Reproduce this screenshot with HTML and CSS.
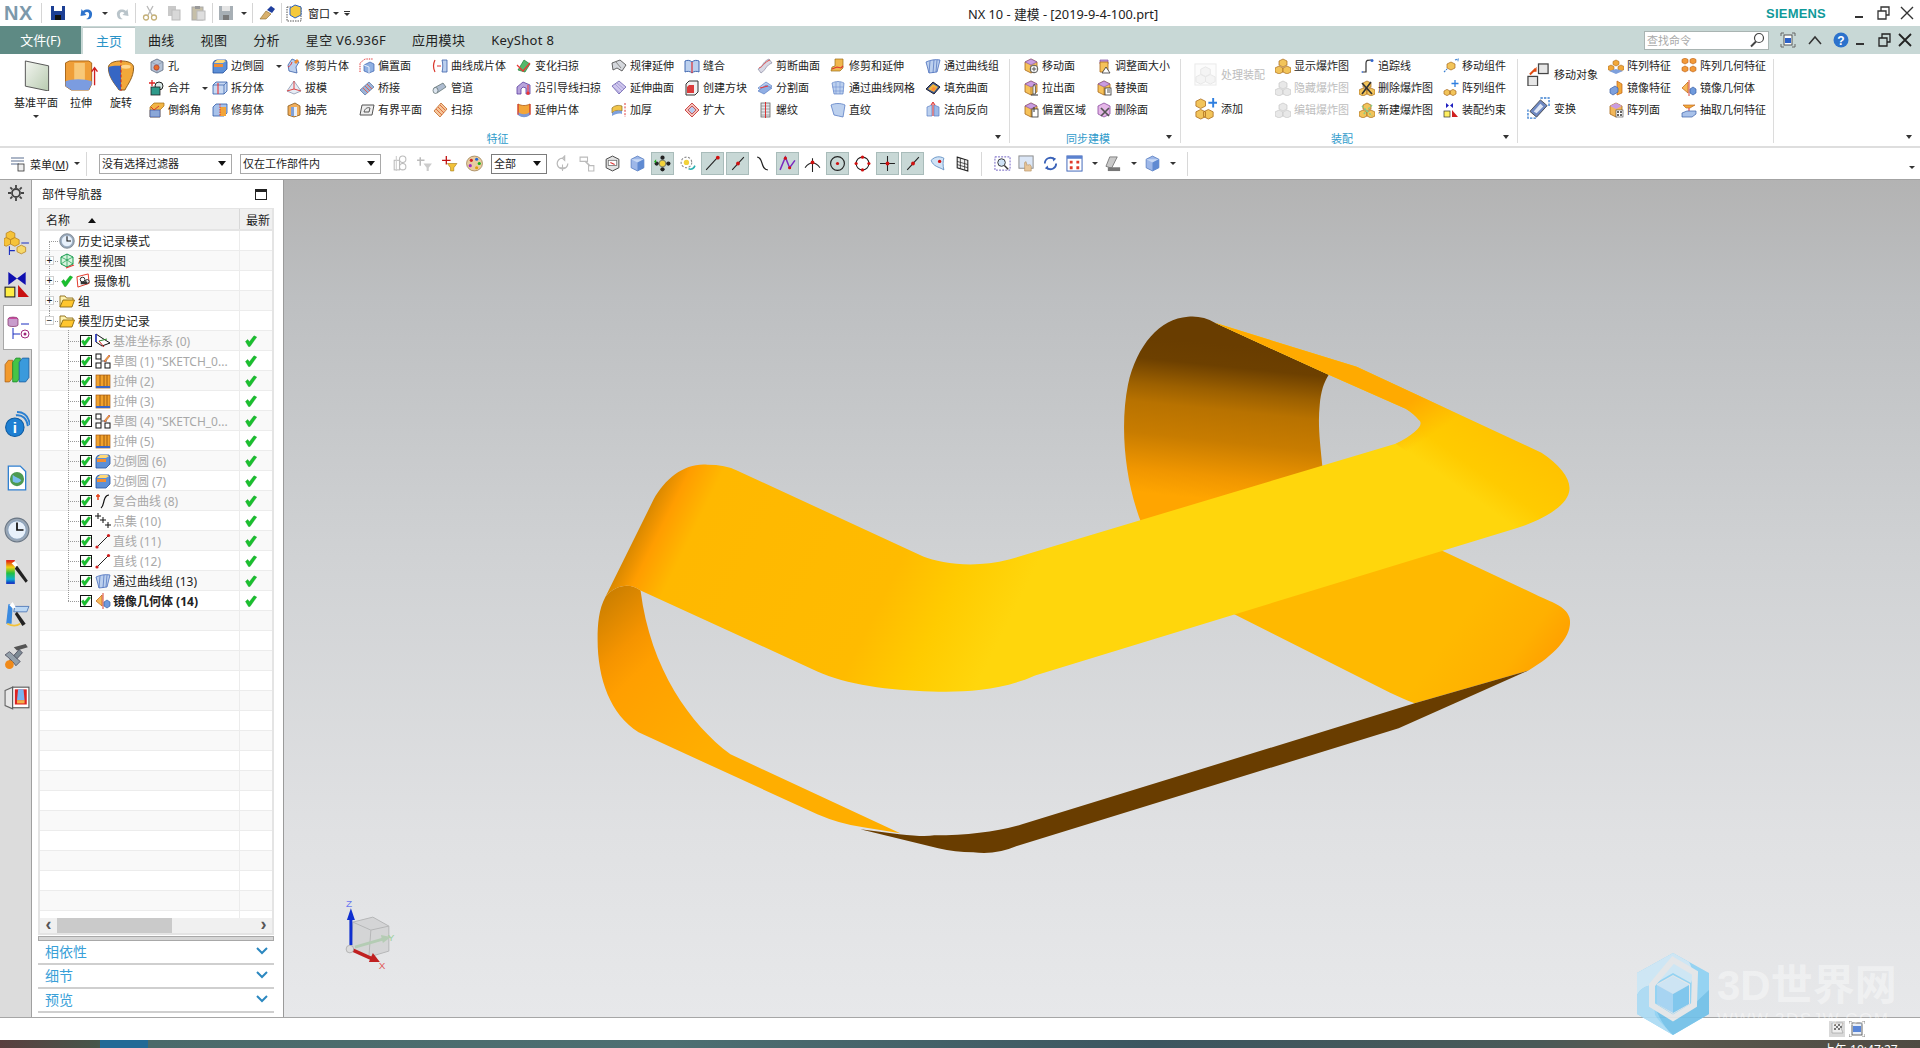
FILE: index.html
```html
<!DOCTYPE html>
<html lang="zh-CN">
<head>
<meta charset="utf-8">
<title>NX 10 - 建模 - [2019-9-4-100.prt]</title>
<link rel="stylesheet" href="styles.css">
</head>
<body>
<svg class="defs" aria-hidden="true">
<defs>
<symbol id="hole" viewBox="0 0 16 16"><path d="M2 4l6-3 6 3v8l-6 3-6-3z" fill="#b4c2d6" stroke="#5d6b80" stroke-width=".8"/><path d="M2 4l6 3 6-3M8 7v8" fill="none" stroke="#7d8ba0" stroke-width=".6"/><circle cx="7.5" cy="9.5" r="2.6" fill="#e8702a" stroke="#a33" stroke-width=".7"/></symbol>
<symbol id="merge" viewBox="0 0 16 16"><path d="M3 0v6M0 3h6" stroke="#d22" stroke-width="1.3"/><circle cx="10" cy="6" r="4" fill="#d9e8e6" stroke="#222"/><rect x="2" y="7" width="9" height="8" fill="#2e9a8a" stroke="#222" stroke-width=".8"/></symbol>
<symbol id="chamfer" viewBox="0 0 16 16"><path d="M1 5l4-4h10v3l-4 4v7H1z" fill="#f2b544" stroke="#a46a10" stroke-width=".7"/><path d="M1 8h10v7H1z" fill="#8aa7d8" stroke="#3a55a0" stroke-width=".7"/><path d="M2 5l3 3 5-4" fill="none" stroke="#d9352a"/></symbol>
<symbol id="fillet" viewBox="0 0 16 16"><path d="M1 5q1-3 4-3h9l1 2v7l-4 4H1z" fill="#5d8fd6" stroke="#24509e" stroke-width=".8"/><path d="M2 5h9l3-2-2-1H5z" fill="#ffd877"/><path d="M2 6h9v3H2z" fill="#f28d32"/></symbol>
<symbol id="split" viewBox="0 0 16 16"><path d="M1 5l3-3h11v9l-3 3H1z" fill="#c7d8f2" stroke="#2f5aa8" stroke-width=".8"/><path d="M1 5h11v9M12 5l3-3" fill="none" stroke="#2f5aa8" stroke-width=".7"/><path d="M6 3v11" stroke="#e33" stroke-width="1.1"/></symbol>
<symbol id="trimb" viewBox="0 0 16 16"><path d="M1 5l3-3h11v9l-3 3H1z" fill="#a8c2ea" stroke="#2f5aa8" stroke-width=".8"/><rect x="8" y="5" width="6" height="9" fill="#f2a53a"/><path d="M8 2v12" stroke="#d33" stroke-dasharray="1.5 1"/></symbol>
<symbol id="tsheet" viewBox="0 0 16 16"><path d="M6 1l7 3-3 5 1 6-8-2-1-6z" fill="#bcd0ee" stroke="#3a5fa8" stroke-width=".8"/><path d="M11 1l-3 3 2 2 3-3z" fill="#ee8a30"/><path d="M2 9c2-1 3-2 4-5" fill="none" stroke="#e03a3a"/></symbol>
<symbol id="draft" viewBox="0 0 16 16"><path d="M8 1L1 11l7 3 7-3z" fill="#e7ecf4" stroke="#7c8aa5" stroke-width=".7"/><path d="M8 1v8M1 11l7-2 7 2" fill="none" stroke="#d33" stroke-width=".9"/></symbol>
<symbol id="shell" viewBox="0 0 16 16"><path d="M2 4l7-3 5 3v9l-6 2-6-2z" fill="#f0ae5c" stroke="#8a5a1a" stroke-width=".8"/><path d="M5 5h6v9H5z" fill="#7fa0d8"/><path d="M8 5h3v9H8z" fill="#e6edf8"/></symbol>
<symbol id="offs" viewBox="0 0 16 16"><path d="M1 14V5l5-4h8" fill="none" stroke="#d33" stroke-dasharray="1.4 1"/><path d="M5 7l6-3 4 2v7l-5 2-5-2z" fill="#8fb0e2" stroke="#3b62ae" stroke-width=".7"/><path d="M5 7l5 2v6" fill="none" stroke="#e8f0fb"/></symbol>
<symbol id="bridge" viewBox="0 0 16 16"><path d="M1 10l9-8 5 5-9 8z" fill="#9ab3d8" stroke="#54709e" stroke-width=".7"/><path d="M4 8l5 5M6 6l5 5M8 4l5 5" stroke="#e55a4a" stroke-width=".9"/></symbol>
<symbol id="bound" viewBox="0 0 16 16"><path d="M3 3h12l-2 10H1z" fill="#eee" stroke="#555" stroke-width="1"/><path d="M5 10c1-4 4-5 6-4l-1 4z" fill="none" stroke="#555"/></symbol>
<symbol id="curves" viewBox="0 0 16 16"><path d="M3 2C1 6 1 10 3 14" fill="none" stroke="#d9352a" stroke-width="1.2"/><path d="M10 2h5v12h-5c1-4 1-8 0-12z" fill="#bcd0ee" stroke="#3a5fa8" stroke-width=".8"/><path d="M5 8h4" stroke="#d33"/></symbol>
<symbol id="pipe" viewBox="0 0 16 16"><path d="M2 8l9-5 3 4-9 6z" fill="#aebcd0" stroke="#566" stroke-width=".7"/><ellipse cx="3.5" cy="10.5" rx="2.5" ry="3" fill="#dce4ee" stroke="#566" stroke-width=".7"/></symbol>
<symbol id="sweep" viewBox="0 0 16 16"><path d="M2 9l7-8 6 6-7 8z" fill="#f4c79a" stroke="#c46a2a" stroke-width=".8"/><path d="M4 7l6 6M6 5l6 6M8 3l5 5" stroke="#d9552a" stroke-width=".8"/></symbol>
<symbol id="vsweep" viewBox="0 0 16 16"><path d="M2 12L8 2l6 4-5 8z" fill="#56b86a" stroke="#1d7f37" stroke-width=".7"/><path d="M1 7l6 6 7-8" fill="none" stroke="#e33" stroke-width="1.2"/></symbol>
<symbol id="gsweep" viewBox="0 0 16 16"><path d="M1 14V7l6-5 7 3v9h-4V8L7 7 5 9v5z" fill="#b7a4dc" stroke="#5a3e9e" stroke-width=".8"/><path d="M12 5v10" stroke="#e33"/><circle cx="12" cy="13" r="1.6" fill="#e33"/></symbol>
<symbol id="extend" viewBox="0 0 16 16"><path d="M2 2c4 2 8 2 12 0v10c-4 3-8 3-12 0z" fill="#f3a63a" stroke="#b05a10" stroke-width=".8"/><path d="M2 10c4 3 8 3 12 0v3c-4 3-8 3-12 0z" fill="#7c9ad8"/><path d="M2 2v11M14 2v11" stroke="#d33"/></symbol>
<symbol id="law" viewBox="0 0 16 16"><path d="M1 5l8-3 6 5-4 6-5-3-4 2z" fill="#d5d8dd" stroke="#555" stroke-width=".9"/><path d="M5 4l5 6" stroke="#888"/></symbol>
<symbol id="extsurf" viewBox="0 0 16 16"><path d="M1 6l7-5 7 6-7 7z" fill="#cfc7ee" stroke="#6b5fae" stroke-width=".8"/><path d="M4 4l7 7M6 3l7 6M2 7l7 6" stroke="#8e84c8" stroke-width=".6"/></symbol>
<symbol id="thick" viewBox="0 0 16 16"><path d="M1 6c3-3 7-3 10-2v5c-3-1-7-1-10 2z" fill="#f1c54a" stroke="#8a6a1a" stroke-width=".7"/><path d="M1 11c3-3 7-3 10-2v3c-3-1-7 0-10 2z" fill="#7ea0dc"/><path d="M14 1v14" stroke="#d33" stroke-dasharray="2 1.4"/></symbol>
<symbol id="sew" viewBox="0 0 16 16"><path d="M1 3c2-1 5-1 7 1 2-2 5-2 7-1v11c-2-1-5-1-7 1-2-2-5-2-7-1z" fill="#bcd0ee" stroke="#2f5aa8" stroke-width=".9"/><path d="M8 4v11" stroke="#d33" stroke-width="1.2"/></symbol>
<symbol id="block" viewBox="0 0 16 16"><path d="M2 4l3-3h9v11l-3 3H2z" fill="#f1f1f1" stroke="#333"/><path d="M3 7l2-2h5v8H3z" fill="#dc3b3b"/></symbol>
<symbol id="enlarge" viewBox="0 0 16 16"><path d="M8 1l7 7-7 7-7-7z" fill="#f3c0b8" stroke="#c73a3a" stroke-width=".9"/><path d="M8 4l4 4-4 4-4-4z" fill="#b8ccee" stroke="#c73a3a" stroke-width=".8"/></symbol>
<symbol id="cutsurf" viewBox="0 0 16 16"><path d="M1 11C6 9 5 4 12 1l3 4c-6 2-6 7-11 10z" fill="#d8d8e4" stroke="#8a8aa0" stroke-width=".7"/><path d="M2 10c4-1 5-6 11-8" fill="none" stroke="#e25050"/></symbol>
<symbol id="splitf" viewBox="0 0 16 16"><path d="M1 8l8-6 6 4-8 7z" fill="#b8ccee" stroke="#5a7ec4" stroke-width=".7"/><path d="M1 11l8-6 6 3-8 6z" fill="#90aee4" stroke="#5a7ec4" stroke-width=".7"/><path d="M3 8l8-2" stroke="#e33"/></symbol>
<symbol id="thread" viewBox="0 0 16 16"><rect x="4" y="1" width="9" height="14" fill="#e2e6ec" stroke="#666" stroke-width=".8"/><path d="M4 4h9M4 7h9M4 10h9M4 13h9" stroke="#888" stroke-width=".7"/><path d="M8.5 0v16" stroke="#d33"/></symbol>
<symbol id="trimext" viewBox="0 0 16 16"><path d="M5 1h8v9l-3 3H1l1-4 3-1z" fill="#f0b84e" stroke="#9a6a14" stroke-width=".7"/><path d="M2 11l5-2 4 1 2-2" fill="none" stroke="#d33" stroke-width="1.1"/></symbol>
<symbol id="mesh" viewBox="0 0 16 16"><path d="M2 3c4-2 8-2 12 0l-1 11H4z" fill="#bcd0ee" stroke="#5a7ec4" stroke-width=".7"/><path d="M6 2v12M10 2v12M2 7h12M3 11h11" stroke="#6f90d4" stroke-width=".6"/></symbol>
<symbol id="ruled" viewBox="0 0 16 16"><path d="M1 3c4-2 10-2 14 0l-2 12c-3-1-6-1-9-2z" fill="#bcd0ee" stroke="#5a7ec4" stroke-width=".8"/></symbol>
<symbol id="lofts" viewBox="0 0 16 16"><path d="M1 4c4-2 10-3 14-2l-3 12-8 1z" fill="#bcd0ee" stroke="#4a6ebc" stroke-width=".8"/><path d="M5 3l-1 12M9 2L8 15M12 2l-1 12" stroke="#4a6ebc" stroke-width=".7"/></symbol>
<symbol id="fills" viewBox="0 0 16 16"><path d="M1 9l7-7 7 5-6 7z" fill="#3d5a94" stroke="#223"/><path d="M3 9l5-5 5 3-4 5z" fill="#f2b53c"/><path d="M6 10l2-3 3 1-2 3z" fill="#ff8a3a"/></symbol>
<symbol id="normal" viewBox="0 0 16 16"><path d="M2 5l5-2v11H2z" fill="#bcd0ee" stroke="#5a7ec4" stroke-width=".7"/><path d="M9 3l5 2v9H9z" fill="#9dbae8" stroke="#5a7ec4" stroke-width=".7"/><path d="M8 14V1M6 3l2-3 2 3" fill="none" stroke="#d33"/></symbol>
<symbol id="ycube" viewBox="0 0 16 16"><path d="M8 1l6 3v8l-6 3-6-3V4z" fill="#f6c25a" stroke="#a8681a" stroke-width=".8"/><path d="M2 4l6 3 6-3-6-3z" fill="#c99ce0" stroke="#7c4aa0" stroke-width=".6"/><path d="M8 7v8" stroke="#a8681a" stroke-width=".6"/></symbol>
<symbol id="mface" viewBox="0 0 16 16"><use href="#ycube"/><circle cx="11" cy="11" r="3.8" fill="#fff" stroke="#555"/><path d="M11 8.6v4.8M8.6 11h4.8" stroke="#555"/></symbol>
<symbol id="pface" viewBox="0 0 16 16"><use href="#ycube"/><path d="M10 14V7l1.2-3 1.2 3v7z" fill="#fff" stroke="#333" stroke-width=".7"/><path d="M8 15h7" stroke="#333"/></symbol>
<symbol id="oface" viewBox="0 0 16 16"><use href="#ycube"/><rect x="9" y="7" width="6" height="8" fill="#fff" stroke="#333" stroke-width=".8"/><path d="M11 5v5" stroke="#333"/></symbol>
<symbol id="rsface" viewBox="0 0 16 16"><path d="M4 2h8v4H4z" fill="#c99ce0" stroke="#7c4aa0" stroke-width=".7"/><path d="M4 4v10h8V4z" fill="#f6c25a" stroke="#a8681a" stroke-width=".8"/><path d="M10 9l4 6H6z" fill="#fff" stroke="#333" stroke-width=".8"/></symbol>
<symbol id="rpface" viewBox="0 0 16 16"><use href="#ycube"/><rect x="9" y="8" width="6" height="7" fill="#fff" stroke="#333" stroke-width=".8"/><path d="M11 10h3M11 12h3" stroke="#555"/></symbol>
<symbol id="dface" viewBox="0 0 16 16"><path d="M8 1l6 3v8l-6 3-6-3V4z" fill="#e5b7e8" stroke="#8a4aa0" stroke-width=".8"/><path d="M5 6l8 8M13 6l-8 8" stroke="#555" stroke-width="1.7"/></symbol>
<symbol id="asm" viewBox="0 0 16 16"><path d="M8 1l4 2v4l-4 2-4-2V3z" fill="#f2c45a" stroke="#a8681a" stroke-width=".7"/><path d="M4 8l4 2v4l-4 2-4-2v-4z" fill="#f2c45a" stroke="#a8681a" stroke-width=".7"/><path d="M12 8l4 2v4l-4 2-4-2v-4z" fill="#f2c45a" stroke="#a8681a" stroke-width=".7"/></symbol>
<symbol id="track" viewBox="0 0 16 16"><path d="M4 14h3V5c0-3 2-3 5-3" fill="none" stroke="#333" stroke-width="1.2"/><path d="M2 14l2-1v2z" fill="#36c"/><circle cx="13" cy="2.5" r="1.5" fill="#36c"/></symbol>
<symbol id="xasm" viewBox="0 0 16 16"><use href="#asm"/><path d="M3 3l10 11M12 2L3 14" stroke="#333" stroke-width="1.6"/></symbol>
<symbol id="burst" viewBox="0 0 16 16"><use href="#asm"/><path d="M3 4l10 10M13 3L4 13" stroke="#8c8" stroke-dasharray="2 1.4" stroke-width="1.5"/></symbol>
<symbol id="mvcomp" viewBox="0 0 16 16"><path d="M1 14l3-3M12 2l3-1v3" fill="none" stroke="#3a7fd0" stroke-width="1.2" stroke-dasharray="2 1"/><path d="M8 4l4 2v4l-4 2-4-2V6z" fill="#f2c45a" stroke="#a8681a" stroke-width=".7"/></symbol>
<symbol id="patc" viewBox="0 0 16 16"><path d="M12 0v7M8.5 3.5h7" stroke="#2f7fe0" stroke-width="1.3"/><path d="M1 11l3-1.600 3 1.600v3l-3 1.600-3-1.600zM7 11l3-1.600 3 1.600v3l-3 1.600-3-1.600z" fill="#f2c45a" stroke="#a8681a" stroke-width=".7"/></symbol>
<symbol id="constr" viewBox="0 0 16 16"><path d="M3 1l3 2.500L3 6zM10 1L7 3.500 10 6z" fill="#2020c0"/><rect x="1" y="9" width="6" height="6" fill="#ffef60" stroke="#333" stroke-width=".7"/><path d="M9 8l6 7H9z" fill="#d02020"/></symbol>
<symbol id="patf" viewBox="0 0 16 16"><path d="M8 2l3 1.500v3L8 8 5 6.500v-3zM3 7l3 1.500v3L3 13 0 11.500v-3zM13 7l3 1.500v3L13 13l-3-1.500v-3z" fill="#f2a83a" stroke="#a8681a" stroke-width=".6"/><path d="M1 13l7 3 7-3-7-2z" fill="#7ea0dc"/></symbol>
<symbol id="mirf" viewBox="0 0 16 16"><path d="M9 1l5 3v9l-5 2z" fill="#f2a83a" stroke="#c06010" stroke-width=".7"/><path d="M2 9l5-3 3 2v4l-5 3-3-2z" fill="#7ea0dc" stroke="#3a5fa8" stroke-width=".7"/></symbol>
<symbol id="patface" viewBox="0 0 16 16"><path d="M8 1l6 3v8l-6 3-6-3V4z" fill="#f2b75a" stroke="#a8681a" stroke-width=".8"/><path d="M2 4l6 3 6-3-6-3z" fill="#c99ce0"/><rect x="8" y="8" width="7" height="7" fill="#fff" stroke="#444" stroke-width=".6"/><path d="M9 10h2M12 10h2M9 13h2M12 13h2" stroke="#333" stroke-width="1.400"/></symbol>
<symbol id="patg" viewBox="0 0 16 16"><path d="M4 0l3 1.500v3L4 6 1 4.500v-3zM12 0l3 1.500v3L12 6 9 4.500v-3zM4 8l3 1.500v3L4 14l-3-1.500v-3zM12 8l3 1.500v3L12 14l-3-1.500v-3z" fill="#f29a3a" stroke="#b85a10" stroke-width=".6"/></symbol>
<symbol id="mirg" viewBox="0 0 16 16"><path d="M1 8l6-6v11z" fill="#f7b95a" stroke="#c06010" stroke-width=".7"/><path d="M8 0v16" stroke="#d84030"/><path d="M9 9l3-2 3 2v4l-3 2-3-2z" fill="#6f9adc" stroke="#3a5fa8" stroke-width=".7"/></symbol>
<symbol id="extract" viewBox="0 0 16 16"><path d="M2 3h12L9 6H5z" fill="#f2a83a" stroke="#b85a10" stroke-width=".6"/><path d="M8 6v4" stroke="#d33"/><path d="M1 11l5-2h9v3l-4 3H1z" fill="#a9c2ea" stroke="#3a5fa8" stroke-width=".7"/></symbol>
<symbol id="ok" viewBox="0 0 12 12"><path d="M.5 6.500l2.200-2 1.700 2.200L9 .8l2.700 1.300L5 11.500H3.500z" fill="#19c02e" stroke="#0f9a22" stroke-width=".4"/></symbol>
<symbol id="pext" viewBox="0 0 16 16"><rect x="1" y="2" width="14" height="13" fill="#f2a22c" stroke="#a85a0c" stroke-width=".7"/><path d="M5 2v13M9 2v13M12 2v13" stroke="#8a4a0a" stroke-width=".8"/><path d="M1 13h14v2H1z" fill="#3a66c4"/></symbol>
<symbol id="psketch" viewBox="0 0 16 16"><rect x="1" y="1" width="5" height="5" fill="#fff" stroke="#111"/><rect x="1" y="10" width="5" height="5" fill="#fff" stroke="#111"/><rect x="10" y="10" width="5" height="5" fill="#fff" stroke="#111"/><path d="M6 6v4M6 8h6" stroke="#111" stroke-width=".7"/><path d="M9 8l5-6 1 1-5 6z" fill="#f2c23a" stroke="#b33" stroke-width=".6"/></symbol>
<symbol id="pline" viewBox="0 0 16 16"><path d="M2 14L14 2" stroke="#222"/><circle cx="2" cy="14" r="1.600" fill="#d02020"/><circle cx="13.500" cy="2.500" r="1.600" fill="#d02020"/></symbol>
<symbol id="pts" viewBox="0 0 16 16"><path d="M3 0v6M0 3h6M8 4v6M5 7h6M13 9v6M10 12h6" stroke="#111"/></symbol>
<symbol id="pcurve" viewBox="0 0 16 16"><path d="M6 15c3-2 2-6 4-10 1-2 2-3 4-3" fill="none" stroke="#111" stroke-width="1.200"/><path d="M3 1v6M1 3h4" stroke="#e33a10" stroke-width="1.400"/></symbol>
<symbol id="pcsys" viewBox="0 0 16 16"><path d="M1 1v8l6 4 8-3-8-5z" fill="#fff" stroke="#111"/><path d="M1 1v8" stroke="#2233dd" stroke-width="1.300"/><path d="M4 8l8-2" stroke="#2a8a2a"/><path d="M4 8l5 6" stroke="#d02020"/></symbol>
<symbol id="folder" viewBox="0 0 16 16"><path d="M1 14V3h5l1.500 2H14v3" fill="#fff2b0" stroke="#8a6a14" stroke-width=".9"/><path d="M1 14l3-7h11.500L13 14z" fill="#ffc62e" stroke="#8a6a14" stroke-width=".9"/></symbol>
<symbol id="clock" viewBox="0 0 24 24"><circle cx="12" cy="12" r="11" fill="#9aa7b5" stroke="#6a7684"/><circle cx="12" cy="12" r="8.500" fill="#e8f1fb" stroke="#8ca3bd"/><path d="M12 5v7h6" fill="none" stroke="#111" stroke-width="1.600"/></symbol>
<symbol id="mview" viewBox="0 0 16 16"><path d="M8 1l6 3v7l-6 3-6-3V4z" fill="#d8f4de" stroke="#139a4a" stroke-width="1"/><path d="M2 4l6 3 6-3M8 1v13M2 11l6-4 6 4" fill="none" stroke="#139a4a" stroke-width=".7"/><path d="M7 15l8-3" stroke="#e33" stroke-width="1.200"/></symbol>
<symbol id="cam" viewBox="0 0 16 16"><path d="M1 4l12-3 1 10-12 4z" fill="#fff" stroke="#e03020" stroke-width="1"/><circle cx="7" cy="7" r="2.500" fill="#fff" stroke="#222"/><circle cx="12" cy="9" r="2" fill="#fff" stroke="#222"/><rect x="5" y="9" width="7" height="3" fill="#333"/></symbol>
<symbol id="r-asm" viewBox="0 0 24 24"><path d="M6 1l4 2v4L6 9 2 7V3z" fill="#f6c338" stroke="#b8801a" stroke-width=".7"/><path d="M2 7l4 2v4l-4 2-2-1V8z" fill="#f6c338" stroke="#b8801a" stroke-width=".7"/><path d="M10 7l4 2v4l-4 2-4-2V9z" fill="#f6c338" stroke="#b8801a" stroke-width=".7"/><path d="M16 14l4 2v4l-4 2-4-2v-4z" fill="#f6d86a" stroke="#b8801a" stroke-width=".7"/><path d="M16 12h7M5 15v8M5 19h5" stroke="#1a2ec0" stroke-width="1"/></symbol>
<symbol id="r-con" viewBox="0 0 24 24"><path d="M4 0l8 6-8 6zM20 0l-8 6 8 6z" fill="#1010b0"/><rect x="1" y="14" width="9" height="9" fill="#ffee44" stroke="#222"/><path d="M13 12l10 11H13z" fill="#c81010"/></symbol>
<symbol id="r-part" viewBox="0 0 24 24"><ellipse cx="7" cy="3" rx="5" ry="2" fill="#c84aa0" stroke="#7c2a60" stroke-width=".6"/><path d="M2 3v6c0 2 10 2 10 0V3" fill="#c89ccc" stroke="#7c2a60" stroke-width=".7"/><path d="M15 8h8M7 12v11M7 18h7" stroke="#1a2ec0" stroke-width="1"/><circle cx="19" cy="18" r="4" fill="#fff" stroke="#a0287a"/><circle cx="19" cy="18" r="1.500" fill="#a0287a"/></symbol>
<symbol id="r-book" viewBox="0 0 24 24"><path d="M1 7l3-4h4v16l-3 4H1z" fill="#f29a2c" stroke="#a8601a" stroke-width=".7"/><path d="M8 5l3-4h4v18l-3 4H8z" fill="#46c446" stroke="#1a8a2a" stroke-width=".7"/><path d="M14 5l3-4h6v18l-3 4h-6z" fill="#3a9adc" stroke="#1a5a9a" stroke-width=".7"/></symbol>
<symbol id="r-info" viewBox="0 0 24 24"><circle cx="10" cy="15" r="8.500" fill="#1e7fd2" stroke="#0d5aa0"/><text x="10" y="20" text-anchor="middle" font-size="14" font-weight="700" fill="#fff" font-family="Liberation Sans">i</text><path d="M11 4c6-1 10 3 11 10M12 1c7 0 11 5 12 12" fill="none" stroke="#2a7fd0" stroke-width="1.800"/></symbol>
<symbol id="r-web" viewBox="0 0 24 24"><path d="M4 1h11l5 5v17H4z" fill="#fff" stroke="#2f7fd0" stroke-width="1.200"/><circle cx="12" cy="13" r="6.500" fill="#4d9a52"/><path d="M8 9c3 3 5 2 8 5-2 3-6 3-8 1z" fill="#79bdf0"/></symbol>
<symbol id="r-rain" viewBox="0 0 24 24"><defs><linearGradient id="rg" x1="0" y1="0" x2="0" y2="1"><stop offset="0" stop-color="#e01010"/><stop offset=".3" stop-color="#f0d010"/><stop offset=".55" stop-color="#20c040"/><stop offset=".8" stop-color="#10b0d0"/><stop offset="1" stop-color="#1020c0"/></linearGradient></defs><rect x="2" y="1" width="8" height="22" fill="url(#rg)"/><path d="M12 6l10 14-2 2L10 9z" fill="#222"/><path d="M10 2l3 4-3 1-3-3z" fill="#fff"/></symbol>
<symbol id="r-wiz" viewBox="0 0 24 24"><path d="M4 3h4l-1 18H2z" fill="#3a8ae0"/><path d="M10 5h13l-2 5H9z" fill="#bcd8f4" stroke="#3a6ab0" stroke-width=".7"/><path d="M12 10l8 11-3 2-7-11z" fill="#222"/><path d="M3 21c4 2 9 2 12 0" fill="none" stroke="#f2c23a" stroke-width="1.500"/><path d="M8 1l3 5-3 1-3-3z" fill="#fff"/></symbol>
<symbol id="r-tool" viewBox="0 0 24 24"><path d="M9 4l11-3 2 3-10 3z" fill="#555"/><path d="M14 6l-9 10 3 3 9-10z" fill="#7d8a94" stroke="#445" stroke-width=".7"/><path d="M1 11c3 2 8 7 10 10l4-4C12 15 8 10 5 8z" fill="#94a0aa" stroke="#445" stroke-width=".7"/><circle cx="5" cy="20" r="4" fill="#f08a1a"/></symbol>
<symbol id="r-door" viewBox="0 0 24 24"><path d="M1 5l7-3v20l-7-3z" fill="#e8e8e8" stroke="#666"/><rect x="8" y="2" width="15" height="19" fill="#fff" stroke="#555"/><rect x="10" y="4" width="11" height="14" fill="#d22"/><path d="M13 4h5l1 10h-7z" fill="#7ab4f0"/><rect x="12" y="14" width="7" height="3" fill="#f2b04a"/></symbol>
<symbol id="t-line" viewBox="0 0 16 16"><path d="M3 14L14 2" stroke="#222"/><circle cx="8.500" cy="8" r="1.800" fill="#d01010"/></symbol>
<symbol id="t-end" viewBox="0 0 16 16"><path d="M2 14L13 2" stroke="#222"/><circle cx="13" cy="2.500" r="1.800" fill="#d01010"/></symbol>
<symbol id="t-zig" viewBox="0 0 16 16"><path d="M1 14L6 2l4 10 5-7" fill="none" stroke="#7a2ac0" stroke-width="1.400"/><circle cx="6" cy="3" r="1.500" fill="#d01010"/><circle cx="10" cy="12" r="1.500" fill="#d01010"/></symbol>
<symbol id="t-perp" viewBox="0 0 16 16"><path d="M1 12c4-6 10-6 14 0M8 3v13" fill="none" stroke="#222"/><circle cx="8" cy="7" r="1.800" fill="#d01010"/></symbol>
<symbol id="t-circ" viewBox="0 0 16 16"><circle cx="8" cy="8" r="6.500" fill="none" stroke="#222" stroke-width="1.100"/><circle cx="8" cy="8" r="1.500" fill="#d01010"/></symbol>
<symbol id="t-quad" viewBox="0 0 16 16"><circle cx="8" cy="8" r="6" fill="none" stroke="#222"/><circle cx="8" cy="2" r="1.500" fill="#d01010"/><circle cx="2" cy="8" r="1.500" fill="#d01010"/><circle cx="14" cy="8" r="1.500" fill="#d01010"/><circle cx="8" cy="14" r="1.500" fill="#d01010"/></symbol>
<symbol id="t-cross" viewBox="0 0 16 16"><path d="M1 8h14M8 1v14" stroke="#222"/><circle cx="8" cy="8" r="1.800" fill="#d01010"/></symbol>
<symbol id="t-curve" viewBox="0 0 16 16"><path d="M3 2c6 0 3 12 10 12" fill="none" stroke="#222" stroke-width="1.200"/></symbol>
<symbol id="t-surf" viewBox="0 0 16 16"><path d="M2 5c4-4 8-4 12-2-1 3-1 7 0 11-5-3-10-3-12-9z" fill="#cfe2f5" stroke="#5a8ac0" stroke-width=".8"/><circle cx="10" cy="6" r="1.600" fill="#d01010"/></symbol>
<symbol id="t-grid" viewBox="0 0 16 16"><path d="M3 2l10 3v10L3 12z" fill="#f2f2f2" stroke="#222"/><path d="M6 3v10M10 4v10M3 6l10 3M3 9l10 3" stroke="#222" stroke-width=".7"/></symbol>
<symbol id="t-snap" viewBox="0 0 16 16"><circle cx="8" cy="8" r="3" fill="#f2d23a" stroke="#886"/><circle cx="8" cy="2.500" r="2" fill="#222"/><circle cx="8" cy="13.500" r="2" fill="#222"/><circle cx="2.500" cy="8" r="2" fill="#222"/><circle cx="13.500" cy="8" r="2" fill="#222"/><path d="M0 6l2-2v4z" fill="#1ab01a"/></symbol>
<symbol id="t-snap2" viewBox="0 0 16 16"><circle cx="7" cy="7" r="5" fill="none" stroke="#888" stroke-dasharray="2 1.500"/><circle cx="7" cy="7" r="2.500" fill="#f2d23a"/><path d="M9 13c3 1 5 0 6-3" fill="none" stroke="#2ab0b0" stroke-width="1.500"/></symbol>
<symbol id="t-gfilter" viewBox="0 0 16 16"><path d="M4 2v8M1 5h7" stroke="#bbb" stroke-width="1.400"/><path d="M7 8h8l-3 4v3h-2v-3z" fill="#ccc"/></symbol>
<symbol id="t-target" viewBox="0 0 16 16"><path d="M5 1v8M1 5h8" stroke="#c01010" stroke-width="1.200"/><path d="M6 8h9l-3 4v3h-3v-3z" fill="#f2c23a" stroke="#a8801a" stroke-width=".6"/></symbol>
<symbol id="t-pal" viewBox="0 0 16 16"><ellipse cx="8" cy="8" rx="7.500" ry="7" fill="#e8cca0" stroke="#8a6a3a" stroke-width=".6"/><circle cx="5" cy="5" r="1.500" fill="#d02020"/><circle cx="10" cy="4" r="1.500" fill="#2a6ad0"/><circle cx="12.500" cy="8" r="1.500" fill="#1ab01a"/><circle cx="10" cy="12" r="1.500" fill="#e0a010"/><circle cx="4" cy="10" r="1.500" fill="#a02ac0"/></symbol>
<symbol id="t-gspan" viewBox="0 0 16 16"><rect x="3" y="5" width="5" height="9" fill="none" stroke="#bbb"/><circle cx="11" cy="4" r="3" fill="none" stroke="#bbb"/><circle cx="11" cy="11" r="3" fill="none" stroke="#bbb"/><path d="M5 1v14" stroke="#ccc"/></symbol>
<symbol id="t-gvec" viewBox="0 0 16 16"><path d="M8 3a5 5 0 1 0 5 5M8 3l2-2v4z" fill="none" stroke="#bbb" stroke-width="1.200"/><path d="M8 9v6M5 12h6" stroke="#bbb"/></symbol>
<symbol id="t-gmove" viewBox="0 0 16 16"><path d="M1 2h7v4H1zM9 10h5v5H9z" fill="none" stroke="#bbb"/><path d="M6 6l4 4" stroke="#bbb" stroke-width="1.400"/></symbol>
<symbol id="t-hcube" viewBox="0 0 16 16"><path d="M8 1l6 3v8l-6 3-6-3V4z" fill="#e3e3e3" stroke="#444" stroke-width=".9"/><rect x="4" y="5" width="8" height="5" fill="#fff" stroke="#666" stroke-width=".7"/><path d="M6 7l4 2" stroke="#d33"/></symbol>
<symbol id="t-bcube" viewBox="0 0 16 16"><path d="M8 1l6 3v8l-6 3-6-3V4z" fill="#9db7e8" stroke="#5077bd" stroke-width=".7"/><path d="M2 4l6 3 6-3" fill="#c8d9f5"/><path d="M8 7v8l6-3V4z" fill="#5f8ad2"/></symbol>
<symbol id="t-zoom" viewBox="0 0 18 18"><rect x="1" y="2" width="16" height="14" fill="#fff" stroke="#6a5ac0" stroke-dasharray="2 1.300"/><circle cx="8" cy="8" r="4" fill="#cfe2f5" stroke="#333"/><path d="M11 11l4 4" stroke="#333" stroke-width="1.500"/></symbol>
<symbol id="t-hand" viewBox="0 0 18 18"><rect x="1" y="1" width="15" height="13" fill="#dbe6f6" stroke="#888"/><path d="M7 17V8l1.500-1 1 4 1-1 1 1 1-1 1.500 2v5z" fill="#e8c69a" stroke="#b08a5a" stroke-width=".6"/></symbol>
<symbol id="t-rot" viewBox="0 0 18 18"><path d="M3 9a6 6 0 0 1 10-4.500M15 9a6 6 0 0 1-10 4.500" fill="none" stroke="#3a62b8" stroke-width="1.900"/><path d="M11 2l4 2-3 3zM7 16l-4-2 3-3z" fill="#3a62b8"/></symbol>
<symbol id="t-views" viewBox="0 0 18 18"><rect x="1" y="1" width="16" height="16" fill="#fff" stroke="#3a62b8"/><rect x="1" y="1" width="16" height="3" fill="#5b82cf"/><path d="M4 6h3v3H4zM11 6h3v3h-3zM4 12h3v3H4zM11 12h3v3h-3z" fill="#e03a2a"/></symbol>
<symbol id="t-shade" viewBox="0 0 18 18"><path d="M1 12l4-10h8L7 14z" fill="#c9c9c9" stroke="#555" stroke-width=".7"/><path d="M3 13h13v4H3z" fill="#777"/></symbol>
<symbol id="t-menu" viewBox="0 0 16 16"><path d="M1 2h13M1 5h13M1 8h8" stroke="#5a6f90" stroke-width="1.200"/><rect x="8" y="8" width="6" height="7" fill="#eee" stroke="#333" stroke-width=".8"/></symbol>
</defs>
</svg>

<div class="app">
  <header class="titlebar">
    <div class="qa">
      <span class="nx">NX</span>
      <i class="qsep m5"></i>
      <span class="q w31"><svg class="qi" viewBox="0 0 16 16"><rect x="1" y="1" width="14" height="14" fill="#1c3f94"/><rect x="4" y="1" width="8" height="5" fill="#fff"/><rect x="5" y="10" width="6" height="5" fill="#111"/></svg></span>
      <span class="q w28"><svg class="qi" viewBox="0 0 16 16"><path d="M13 10C14 5 8 3 4 6L2.500 4l-1 7 6-1-2-2C8 6 11 7 10 11c-.5 2-2 3-3 3 3 1 5.500 0 6-4z" fill="#2c72cc"/></svg></span>
      <span class="q w8"><i class="caret"></i></span>
      <span class="q w26"><svg class="qi" viewBox="0 0 16 16"><path d="M3 10C2 5 8 3 12 6l1.500-2 1 7-6-1 2-2C8 6 5 7 6 11c.5 2 2 3 3 3-3 1-5.500 0-6-4z" fill="#b9c4ca"/></svg></span>
      <i class="qsep"></i>
      <span class="q w28"><svg class="qi" viewBox="0 0 16 16"><path d="M11 1L6 10M5 1l5 9" stroke="#b8b8b8" stroke-width="1.300"/><circle cx="4" cy="12.500" r="2.500" fill="none" stroke="#c4b078" stroke-width="1.300"/><circle cx="12" cy="12.500" r="2.500" fill="none" stroke="#c4b078" stroke-width="1.300"/></svg></span>
      <span class="q w20"><svg class="qi" viewBox="0 0 16 16"><rect x="2" y="1" width="8" height="10" fill="#c9c9c9"/><rect x="6" y="5" width="8" height="10" fill="#d8d8d8" stroke="#bbb"/></svg></span>
      <span class="q w28"><svg class="qi" viewBox="0 0 16 16"><rect x="2" y="2" width="11" height="13" fill="#c6bfa8" stroke="#aaa"/><rect x="5" y="1" width="5" height="3" fill="#999"/><rect x="7" y="6" width="8" height="9" fill="#dedede" stroke="#bbb"/></svg></span>
      <i class="qsep"></i>
      <span class="q w26"><svg class="qi" viewBox="0 0 16 16"><rect x="1" y="1" width="14" height="14" fill="#a7afb5"/><rect x="4" y="1" width="8" height="5" fill="#e5e5e5"/><rect x="5" y="10" width="6" height="5" fill="#7a7a7a"/></svg></span>
      <span class="q w10"><i class="caret"></i></span>
      <i class="qsep m3"></i>
      <span class="q w28"><svg class="qi" viewBox="0 0 16 16"><path d="M1 14l6-8 5 3-5 5z" fill="#d8b06c" stroke="#8a6a2a" stroke-width=".6"/><path d="M8 5l4-4 4 3-3 4z" fill="#1f3f9e"/></svg></span>
      <i class="qsep"></i>
      <span class="q w26"><svg class="qi big" viewBox="0 0 18 18"><rect x="1" y="3" width="14" height="14" fill="#fff" stroke="#555" stroke-dasharray="1.500 1"/><path d="M9 1l6 2v8l-6 3-5-3V4z" fill="#f5c93c" stroke="#2f63c0"/></svg></span>
      <span class="winmenu">窗口</span>
      <span class="q w12"><i class="caret"></i></span>
      <span class="q w10"><i class="caret bar"></i></span>
    </div>
    <div class="apptitle">NX 10 - 建模 - [2019-9-4-100.prt]</div>
    <div class="siemens">SIEMENS</div>
    <div class="winctl">
      <svg class="wc" viewBox="0 0 16 16"><path d="M4 12h8" stroke="#333" stroke-width="2"/></svg>
      <svg class="wc" viewBox="0 0 16 16"><path d="M3 6h8v8H3zM6 6V2h8v8h-3" fill="none" stroke="#333" stroke-width="1.300"/></svg>
      <svg class="wc" viewBox="0 0 16 16"><path d="M2 2l12 12M14 2L2 14" stroke="#333" stroke-width="1.400"/></svg>
    </div>
  </header>

  <nav class="tabs">
    <span class="tab-file">文件(F)</span>
    <span class="tab-home">主页</span>
    <span class="tab">曲线</span>
    <span class="tab">视图</span>
    <span class="tab">分析</span>
    <span class="tab">星空 V6.936F</span>
    <span class="tab">应用模块</span>
    <span class="tab">KeyShot 8</span>
    <div class="tabs-right">
      <div class="search"><span>查找命令</span><svg class="search-i" viewBox="0 0 16 16"><circle cx="10" cy="6" r="4.500" fill="#fff" stroke="#444" stroke-width="1.200"/><path d="M7 9.500L2 14.500" stroke="#444" stroke-width="2"/></svg></div>
      <svg class="ti m8" viewBox="0 0 16 16"><path d="M1 4V1h3M12 1h3v3M15 12v3h-3M4 15H1v-3" fill="none" stroke="#666"/><rect x="4" y="3" width="8" height="10" fill="#fff" stroke="#555"/><rect x="5" y="6" width="6" height="5" fill="#2c62c8"/></svg>
      <svg class="ti m5" viewBox="0 0 16 16"><path d="M2 12l6-7 6 7" fill="none" stroke="#333" stroke-width="1.500"/></svg>
      <svg class="ti m4" viewBox="0 0 16 16"><circle cx="8" cy="8" r="7.500" fill="#2c72cc"/><text x="8" y="12.500" text-anchor="middle" font-size="12" font-weight="700" fill="#fff" font-family="Liberation Sans">?</text></svg>
      <svg class="ti m0" viewBox="0 0 16 16"><path d="M4 12h8" stroke="#333" stroke-width="2"/></svg>
      <svg class="ti m2" viewBox="0 0 16 16"><path d="M3 6h8v8H3zM6 6V2h8v8h-3" fill="none" stroke="#222" stroke-width="1.300"/></svg>
      <svg class="ti m1" viewBox="0 0 16 16"><path d="M2 2l12 12M14 2L2 14" stroke="#222" stroke-width="1.800"/></svg>
    </div>
  </nav>

  <section class="ribbon">
    <div class="group g-feat">
      <div class="g-body">
        <div class="large">
          <div class="lg lg1"><svg class="lgi" viewBox="0 0 30 32"><defs><linearGradient id="pl" x1="0" y1="0" x2="1" y2="1"><stop offset="0" stop-color="#f3f5f0"/><stop offset="1" stop-color="#b8cbb0"/></linearGradient></defs><path d="M4 1l24 5v26L4 27z" fill="url(#pl)" stroke="#555"/></svg><span>基准平面</span><i class="caret"></i></div>
          <div class="lg lg2"><svg class="lgi" viewBox="0 0 34 32"><path d="M1 3l4-2h20l3 2v22l-3 6H7l-6-4z" fill="#ef9e38" stroke="#a8661a"/><path d="M10 3h11v25H10z" fill="#f8c878"/><path d="M1 22c6-3 20-3 27 0v3l-3 6H7l-6-4z" fill="#7b9ce0"/><path d="M31 26V9M28 12l3-4 3 4" fill="none" stroke="#d02020" stroke-width="1.400"/></svg><span>拉伸</span></div>
          <div class="lg lg3"><svg class="lgi" viewBox="0 0 30 32"><path d="M2 8C2 3 8 1 15 1s13 2 13 7c0 10-6 17-9 23h-6C9 25 2 18 2 8z" fill="#f2a83a" stroke="#8a5a1a"/><path d="M2 8c0 10 7 17 11 23h2V6C9 6 3 6 2 8z" fill="#3666c4"/><path d="M15 0v32" stroke="#d02020" stroke-dasharray="3 2"/><ellipse cx="20" cy="7" rx="5" ry="2" fill="#ffd890"/></svg><span>旋转</span></div>
        </div>
        <div class="grid c-feat">
          <div class="it"><svg class="ic"><use href="#hole"/></svg>孔</div>
          <div class="it"><svg class="ic"><use href="#merge"/></svg>合并<i class="caret ml"></i></div>
          <div class="it"><svg class="ic"><use href="#chamfer"/></svg>倒斜角</div>
          <div class="it"><svg class="ic"><use href="#fillet"/></svg>边倒圆<i class="caret ml"></i></div>
          <div class="it"><svg class="ic"><use href="#split"/></svg>拆分体</div>
          <div class="it"><svg class="ic"><use href="#trimb"/></svg>修剪体</div>
          <div class="it"><svg class="ic"><use href="#tsheet"/></svg>修剪片体</div>
          <div class="it"><svg class="ic"><use href="#draft"/></svg>拔模</div>
          <div class="it"><svg class="ic"><use href="#shell"/></svg>抽壳</div>
          <div class="it"><svg class="ic"><use href="#offs"/></svg>偏置面</div>
          <div class="it"><svg class="ic"><use href="#bridge"/></svg>桥接</div>
          <div class="it"><svg class="ic"><use href="#bound"/></svg>有界平面</div>
          <div class="it"><svg class="ic"><use href="#curves"/></svg>曲线成片体</div>
          <div class="it"><svg class="ic"><use href="#pipe"/></svg>管道</div>
          <div class="it"><svg class="ic"><use href="#sweep"/></svg>扫掠</div>
          <div class="it"><svg class="ic"><use href="#vsweep"/></svg>变化扫掠</div>
          <div class="it"><svg class="ic"><use href="#gsweep"/></svg>沿引导线扫掠</div>
          <div class="it"><svg class="ic"><use href="#extend"/></svg>延伸片体</div>
          <div class="it"><svg class="ic"><use href="#law"/></svg>规律延伸</div>
          <div class="it"><svg class="ic"><use href="#extsurf"/></svg>延伸曲面</div>
          <div class="it"><svg class="ic"><use href="#thick"/></svg>加厚</div>
          <div class="it"><svg class="ic"><use href="#sew"/></svg>缝合</div>
          <div class="it"><svg class="ic"><use href="#block"/></svg>创建方块</div>
          <div class="it"><svg class="ic"><use href="#enlarge"/></svg>扩大</div>
          <div class="it"><svg class="ic"><use href="#cutsurf"/></svg>剪断曲面</div>
          <div class="it"><svg class="ic"><use href="#splitf"/></svg>分割面</div>
          <div class="it"><svg class="ic"><use href="#thread"/></svg>螺纹</div>
          <div class="it"><svg class="ic"><use href="#trimext"/></svg>修剪和延伸</div>
          <div class="it"><svg class="ic"><use href="#mesh"/></svg>通过曲线网格</div>
          <div class="it"><svg class="ic"><use href="#ruled"/></svg>直纹</div>
          <div class="it"><svg class="ic"><use href="#lofts"/></svg>通过曲线组</div>
          <div class="it"><svg class="ic"><use href="#fills"/></svg>填充曲面</div>
          <div class="it"><svg class="ic"><use href="#normal"/></svg>法向反向</div>
        </div>
      </div>
      <div class="g-foot"><span class="g-t">特征</span><i class="caret g-c"></i></div>
    </div>
    <i class="vdiv"></i>
    <div class="group g-sync">
      <div class="g-body">
        <div class="grid c-sync">
          <div class="it"><svg class="ic"><use href="#mface"/></svg>移动面</div>
          <div class="it"><svg class="ic"><use href="#pface"/></svg>拉出面</div>
          <div class="it"><svg class="ic"><use href="#oface"/></svg>偏置区域</div>
          <div class="it"><svg class="ic"><use href="#rsface"/></svg>调整面大小</div>
          <div class="it"><svg class="ic"><use href="#rpface"/></svg>替换面</div>
          <div class="it"><svg class="ic"><use href="#dface"/></svg>删除面</div>
        </div>
      </div>
      <div class="g-foot"><span class="g-t">同步建模</span><i class="caret g-c"></i></div>
    </div>
    <i class="vdiv"></i>
    <div class="group g-asm">
      <div class="g-body">
        <div class="bigcol">
          <div class="bi off"><svg class="bic" viewBox="0 0 24 24"><rect x="1" y="1" width="22" height="22" fill="#fafafa" stroke="#c9c9c9"/><path d="M12 4l5 2.500v5L12 14l-5-2.500v-5zM7 12l5 2.500v5L7 22l-5-2.500v-5zM17 12l5 2.500v5L17 22l-5-2.500v-5z" fill="#e4e4e4" stroke="#c4c4c4"/></svg>处理装配</div>
          <div class="bi"><svg class="bic" viewBox="0 0 24 24"><path d="M20 1v10M15 6h9" stroke="#2f7fe0" stroke-width="2"/><path d="M7 2l5 2.500v5L7 12 2 9.500v-5zM7 13l5 2.500v5L7 23l-5-2.500v-5zM15 13l5 2.500v5L15 23l-5-2.500v-5z" fill="#f2c45a" stroke="#a8681a" stroke-width=".8"/></svg>添加</div>
        </div>
        <div class="grid c-asm">
          <div class="it"><svg class="ic"><use href="#asm"/></svg>显示爆炸图</div>
          <div class="it off"><svg class="ic"><use href="#asm"/></svg>隐藏爆炸图</div>
          <div class="it off"><svg class="ic"><use href="#asm"/></svg>编辑爆炸图</div>
          <div class="it"><svg class="ic"><use href="#track"/></svg>追踪线</div>
          <div class="it"><svg class="ic"><use href="#xasm"/></svg>删除爆炸图</div>
          <div class="it"><svg class="ic"><use href="#burst"/></svg>新建爆炸图</div>
          <div class="it"><svg class="ic"><use href="#mvcomp"/></svg>移动组件</div>
          <div class="it"><svg class="ic"><use href="#patc"/></svg>阵列组件</div>
          <div class="it"><svg class="ic"><use href="#constr"/></svg>装配约束</div>
        </div>
      </div>
      <div class="g-foot"><span class="g-t">装配</span><i class="caret g-c"></i></div>
    </div>
    <i class="vdiv"></i>
    <div class="group g-move">
      <div class="g-body">
        <div class="bigcol">
          <div class="bi"><svg class="bic" viewBox="0 0 24 24"><rect x="12" y="1" width="10" height="10" fill="#e6e6e6" stroke="#444" stroke-width="1.300"/><rect x="1" y="14" width="10" height="10" fill="#e6e6e6" stroke="#444" stroke-width="1.300"/><path d="M3 12l6-6" stroke="#e04a10" stroke-width="2"/><path d="M10 4v5H6z" fill="#e04a10"/></svg>移动对象</div>
          <div class="bi"><svg class="bic" viewBox="0 0 24 24"><path d="M3 15L14 3l7 6-11 12z" fill="#6f89c2" stroke="#333" stroke-width=".8"/><path d="M7 15l7-8 3 3-7 7z" fill="#dfe7f5"/><path d="M1 13v9h9M14 1h9v9" fill="none" stroke="#3a7fd0" stroke-width="1.400" stroke-dasharray="2.500 1.200"/></svg>变换</div>
        </div>
        <div class="grid c-move">
          <div class="it"><svg class="ic"><use href="#patf"/></svg>阵列特征</div>
          <div class="it"><svg class="ic"><use href="#mirf"/></svg>镜像特征</div>
          <div class="it"><svg class="ic"><use href="#patface"/></svg>阵列面</div>
          <div class="it"><svg class="ic"><use href="#patg"/></svg>阵列几何特征</div>
          <div class="it"><svg class="ic"><use href="#mirg"/></svg>镜像几何体</div>
          <div class="it"><svg class="ic"><use href="#extract"/></svg>抽取几何特征</div>
        </div>
      </div>
      <div class="g-foot"></div>
    </div>
    <i class="vdiv"></i>
    <div class="group g-rest"><div class="g-body"></div><div class="g-foot"><span class="g-t"></span><i class="caret g-c"></i></div></div>
  </section>

  <section class="toolbar">
    <svg class="menu-i"><use href="#t-menu"/></svg>
    <span class="menu-t">菜单(<u>M</u>)</span>
    <i class="caret menu-c"></i>
    <i class="tsep"></i>
    <div class="sel s1">没有选择过滤器<i class="caret dark"></i></div>
    <div class="sel s2">仅在工作部件内<i class="caret dark"></i></div>
    <div class="tset ts-a">
      <span class="tb"><svg class="tic"><use href="#t-gspan"/></svg></span>
      <span class="tb"><svg class="tic"><use href="#t-gfilter"/></svg></span>
      <span class="tb"><svg class="tic"><use href="#t-target"/></svg></span>
      <span class="tb"><svg class="tic"><use href="#t-pal"/></svg></span>
    </div>
    <div class="sel s3">全部<i class="caret dark"></i></div>
    <div class="tset ts-b">
      <span class="tb"><svg class="tic"><use href="#t-gvec"/></svg></span>
      <span class="tb"><svg class="tic"><use href="#t-gmove"/></svg></span>
      <span class="tb"><svg class="tic"><use href="#t-hcube"/></svg></span>
      <span class="tb"><svg class="tic"><use href="#t-bcube"/></svg></span>
      <span class="tb on"><svg class="tic"><use href="#t-snap"/></svg></span>
      <span class="tb"><svg class="tic"><use href="#t-snap2"/></svg></span>
      <span class="tb on"><svg class="tic"><use href="#t-end"/></svg></span>
      <span class="tb on"><svg class="tic"><use href="#t-line"/></svg></span>
      <span class="tb"><svg class="tic"><use href="#t-curve"/></svg></span>
      <span class="tb on"><svg class="tic"><use href="#t-zig"/></svg></span>
      <span class="tb"><svg class="tic"><use href="#t-perp"/></svg></span>
      <span class="tb on"><svg class="tic"><use href="#t-circ"/></svg></span>
      <span class="tb"><svg class="tic"><use href="#t-quad"/></svg></span>
      <span class="tb on"><svg class="tic"><use href="#t-cross"/></svg></span>
      <span class="tb on"><svg class="tic"><use href="#t-line"/></svg></span>
      <span class="tb"><svg class="tic"><use href="#t-surf"/></svg></span>
      <span class="tb"><svg class="tic"><use href="#t-grid"/></svg></span>
    </div>
    <i class="tsep s-c"></i>
    <div class="tset ts-c">
      <span class="tb"><svg class="tic"><use href="#t-zoom"/></svg></span>
      <span class="tb"><svg class="tic"><use href="#t-hand"/></svg></span>
      <span class="tb"><svg class="tic"><use href="#t-rot"/></svg></span>
      <span class="tb"><svg class="tic"><use href="#t-views"/></svg></span>
      <i class="caret tcaret"></i>
      <span class="tb"><svg class="tic"><use href="#t-shade"/></svg></span>
      <i class="caret tcaret"></i>
      <span class="tb"><svg class="tic"><use href="#t-bcube"/></svg></span>
      <i class="caret tcaret"></i>
    </div>
    <i class="tsep s-d"></i>
    <i class="caret end-c"></i>
  </section>

  <main class="work">
    <aside class="rail">
      <svg class="gear" viewBox="0 0 16 16"><circle cx="8" cy="8" r="4" fill="none" stroke="#444" stroke-width="1.800"/><path d="M8 0v3M8 13v3M0 8h3M13 8h3M2.300 2.300l2 2M11.700 11.700l2 2M13.700 2.300l-2 2M4.300 11.700l-2 2" stroke="#444" stroke-width="1.800"/></svg>
      <svg class="ri first"><use href="#r-asm"/></svg>
      <svg class="ri"><use href="#r-con"/></svg>
      <div class="ri-active"><svg class="ri-in"><use href="#r-part"/></svg></div>
      <svg class="ri after"><use href="#r-book"/></svg>
      <svg class="ri far"><use href="#r-info"/></svg>
      <svg class="ri far"><use href="#r-web"/></svg>
      <svg class="ri far2"><use href="#clock"/></svg>
      <svg class="ri"><use href="#r-rain"/></svg>
      <svg class="ri"><use href="#r-wiz"/></svg>
      <svg class="ri"><use href="#r-tool"/></svg>
      <svg class="ri"><use href="#r-door"/></svg>
    </aside>

    <aside class="panel">
      <div class="p-head"><span>部件导航器</span><i class="maxbox"></i></div>
      <div class="tree">
        <div class="t-head">
          <div class="th-name">名称<i class="sort"></i></div>
          <div class="th-new">最新</div>
        </div>
        <div class="rows">
          <div class="row v0"><div class="name"><span class="tw none"></span><svg class="ti-i"><use href="#clock"/></svg><span class="lb">历史记录模式</span></div><div class="lat"></div></div>
          <div class="row v0"><div class="name"><span class="tw">+</span><svg class="ti-i"><use href="#mview"/></svg><span class="lb">模型视图</span></div><div class="lat"></div></div>
          <div class="row v0"><div class="name"><span class="tw">+</span><svg class="vchk"><use href="#ok"/></svg><svg class="ti-i cam"><use href="#cam"/></svg><span class="lb">摄像机</span></div><div class="lat"></div></div>
          <div class="row v0"><div class="name"><span class="tw">+</span><svg class="ti-i"><use href="#folder"/></svg><span class="lb">组</span></div><div class="lat"></div></div>
          <div class="row v0 last"><div class="name"><span class="tw">−</span><svg class="ti-i"><use href="#folder"/></svg><span class="lb">模型历史记录</span></div><div class="lat"></div></div>
          <div class="row v1 dim"><div class="name"><span class="cb"><svg class="cbi"><use href="#ok"/></svg></span><svg class="ti-i"><use href="#pcsys"/></svg><span class="lb">基准坐标系 (0)</span></div><div class="lat"><svg class="vchk"><use href="#ok"/></svg></div></div>
          <div class="row v1 dim"><div class="name"><span class="cb"><svg class="cbi"><use href="#ok"/></svg></span><svg class="ti-i"><use href="#psketch"/></svg><span class="lb">草图 (1) "SKETCH_0...</span></div><div class="lat"><svg class="vchk"><use href="#ok"/></svg></div></div>
          <div class="row v1 dim"><div class="name"><span class="cb"><svg class="cbi"><use href="#ok"/></svg></span><svg class="ti-i"><use href="#pext"/></svg><span class="lb">拉伸 (2)</span></div><div class="lat"><svg class="vchk"><use href="#ok"/></svg></div></div>
          <div class="row v1 dim"><div class="name"><span class="cb"><svg class="cbi"><use href="#ok"/></svg></span><svg class="ti-i"><use href="#pext"/></svg><span class="lb">拉伸 (3)</span></div><div class="lat"><svg class="vchk"><use href="#ok"/></svg></div></div>
          <div class="row v1 dim"><div class="name"><span class="cb"><svg class="cbi"><use href="#ok"/></svg></span><svg class="ti-i"><use href="#psketch"/></svg><span class="lb">草图 (4) "SKETCH_0...</span></div><div class="lat"><svg class="vchk"><use href="#ok"/></svg></div></div>
          <div class="row v1 dim"><div class="name"><span class="cb"><svg class="cbi"><use href="#ok"/></svg></span><svg class="ti-i"><use href="#pext"/></svg><span class="lb">拉伸 (5)</span></div><div class="lat"><svg class="vchk"><use href="#ok"/></svg></div></div>
          <div class="row v1 dim"><div class="name"><span class="cb"><svg class="cbi"><use href="#ok"/></svg></span><svg class="ti-i"><use href="#fillet"/></svg><span class="lb">边倒圆 (6)</span></div><div class="lat"><svg class="vchk"><use href="#ok"/></svg></div></div>
          <div class="row v1 dim"><div class="name"><span class="cb"><svg class="cbi"><use href="#ok"/></svg></span><svg class="ti-i"><use href="#fillet"/></svg><span class="lb">边倒圆 (7)</span></div><div class="lat"><svg class="vchk"><use href="#ok"/></svg></div></div>
          <div class="row v1 dim"><div class="name"><span class="cb"><svg class="cbi"><use href="#ok"/></svg></span><svg class="ti-i"><use href="#pcurve"/></svg><span class="lb">复合曲线 (8)</span></div><div class="lat"><svg class="vchk"><use href="#ok"/></svg></div></div>
          <div class="row v1 dim"><div class="name"><span class="cb"><svg class="cbi"><use href="#ok"/></svg></span><svg class="ti-i"><use href="#pts"/></svg><span class="lb">点集 (10)</span></div><div class="lat"><svg class="vchk"><use href="#ok"/></svg></div></div>
          <div class="row v1 dim"><div class="name"><span class="cb"><svg class="cbi"><use href="#ok"/></svg></span><svg class="ti-i"><use href="#pline"/></svg><span class="lb">直线 (11)</span></div><div class="lat"><svg class="vchk"><use href="#ok"/></svg></div></div>
          <div class="row v1 dim"><div class="name"><span class="cb"><svg class="cbi"><use href="#ok"/></svg></span><svg class="ti-i"><use href="#pline"/></svg><span class="lb">直线 (12)</span></div><div class="lat"><svg class="vchk"><use href="#ok"/></svg></div></div>
          <div class="row v1"><div class="name"><span class="cb"><svg class="cbi"><use href="#ok"/></svg></span><svg class="ti-i"><use href="#lofts"/></svg><span class="lb">通过曲线组 (13)</span></div><div class="lat"><svg class="vchk"><use href="#ok"/></svg></div></div>
          <div class="row v1 end cur"><div class="name"><span class="cb"><svg class="cbi"><use href="#ok"/></svg></span><svg class="ti-i"><use href="#mirg"/></svg><span class="lb">镜像几何体 (14)</span></div><div class="lat"><svg class="vchk"><use href="#ok"/></svg></div></div>
          <div class="row"><div class="name"></div><div class="lat"></div></div><div class="row"><div class="name"></div><div class="lat"></div></div><div class="row"><div class="name"></div><div class="lat"></div></div><div class="row"><div class="name"></div><div class="lat"></div></div>
          <div class="row"><div class="name"></div><div class="lat"></div></div><div class="row"><div class="name"></div><div class="lat"></div></div><div class="row"><div class="name"></div><div class="lat"></div></div><div class="row"><div class="name"></div><div class="lat"></div></div>
          <div class="row"><div class="name"></div><div class="lat"></div></div><div class="row"><div class="name"></div><div class="lat"></div></div><div class="row"><div class="name"></div><div class="lat"></div></div><div class="row"><div class="name"></div><div class="lat"></div></div>
          <div class="row"><div class="name"></div><div class="lat"></div></div><div class="row"><div class="name"></div><div class="lat"></div></div><div class="row"><div class="name"></div><div class="lat"></div></div><div class="row"><div class="name"></div><div class="lat"></div></div>
        </div>
        <div class="hscroll"><span class="arr">‹</span><span class="thumb"></span><span class="arr r">›</span></div>
      </div>
      <div class="splitter"></div>
      <div class="acc"><span>相依性</span><svg class="chev" viewBox="0 0 12 8"><path d="M1 1l5 5 5-5" fill="none" stroke="#2c88c0" stroke-width="2"/></svg></div>
      <div class="acc"><span>细节</span><svg class="chev" viewBox="0 0 12 8"><path d="M1 1l5 5 5-5" fill="none" stroke="#2c88c0" stroke-width="2"/></svg></div>
      <div class="acc"><span>预览</span><svg class="chev" viewBox="0 0 12 8"><path d="M1 1l5 5 5-5" fill="none" stroke="#2c88c0" stroke-width="2"/></svg></div>
    </aside>

    <div class="view">
      <svg class="scene" viewBox="284 180 1636 838">
        <defs>
          <linearGradient id="gBack" gradientUnits="userSpaceOnUse" x1="1228" y1="345" x2="1212" y2="500">
            <stop offset="0" stop-color="#693d00"/><stop offset=".14" stop-color="#6d4000"/><stop offset=".3" stop-color="#9c6000"/><stop offset=".42" stop-color="#b87200"/><stop offset=".62" stop-color="#c87c00"/><stop offset=".85" stop-color="#f09600"/><stop offset="1" stop-color="#ffa500"/>
          </linearGradient>
          <linearGradient id="gLowR" gradientUnits="userSpaceOnUse" x1="1470" y1="610" x2="1555" y2="672">
            <stop offset="0" stop-color="#ffb900"/><stop offset=".6" stop-color="#ffb000"/><stop offset="1" stop-color="#ff9c00"/>
          </linearGradient>
          <linearGradient id="gLeft" gradientUnits="userSpaceOnUse" x1="590" y1="600" x2="720" y2="740">
            <stop offset="0" stop-color="#c67c00"/><stop offset=".3" stop-color="#f59400"/><stop offset=".45" stop-color="#ff9f00"/><stop offset="1" stop-color="#ffae00"/>
          </linearGradient>
          <linearGradient id="gMain" gradientUnits="userSpaceOnUse" x1="629" y1="548" x2="963" y2="714">
            <stop offset="0" stop-color="#d98800"/><stop offset=".053" stop-color="#ff9d00"/><stop offset=".134" stop-color="#ffb800"/><stop offset=".667" stop-color="#ffbb00"/><stop offset=".826" stop-color="#ffcb00"/><stop offset="1" stop-color="#ffd60c"/>
          </linearGradient>
          <linearGradient id="gBend" gradientUnits="userSpaceOnUse" x1="1456" y1="486" x2="1514" y2="404">
            <stop offset="0" stop-color="#ffd60c"/><stop offset=".25" stop-color="#ffcb00"/><stop offset="1" stop-color="#ffbe00"/>
          </linearGradient>
          <linearGradient id="gStrip" gradientUnits="userSpaceOnUse" x1="1440" y1="430" x2="1400" y2="370">
            <stop offset="0" stop-color="#ffaa00" stop-opacity="0"/><stop offset=".55" stop-color="#ffaa00"/>
          </linearGradient>
        </defs>
        <path d="M1215 323C1207 318 1197 316 1188 317C1160 319 1137 345 1128 385C1120 425 1124 480 1142 525L1323 470C1320 440 1318 425 1320 405C1321 392 1324 383 1329 375Z" fill="url(#gBack)"/>
        <path d="M1225 610L1390 693Q1405 700 1415 704L1529 671C1558 654 1574 634 1570 618C1566 606 1552 603 1536 595L1440 550Z" fill="url(#gLowR)"/>
        <path d="M1529 671L1399 729L1016 847Q995 856 973 853Q955 853 938 849L860 830L899 835Q925 838 934 836Q985 836 1022 825L1415 704Z" fill="#693d00"/>
        <path d="M640 591C630 583 615 585 605 597C598 610 597 625 597 640C597 680 610 715 638 733L817 815Q840 825 863 828L900 834L730 755C690 725 650 670 640 591Z" fill="url(#gLeft)"/>
        <path d="M605 597L653 500C665 478 685 463 707 465Q725 465 737 471L923 557C940 564 975 569 1009 560L1396 444L1450 440L1516 529L1035 676C1000 692 960 693 931 692C890 691 845 685 817 672L640 591C630 583 615 585 605 597Z" fill="url(#gMain)"/>
        <path d="M1215 323L1357 367L1542 453C1560 465 1571 478 1570 490C1569 505 1545 520 1516 529L1396 444C1418 433 1425 424 1419 420C1416 416 1412 413 1406 409L1329 375Z" fill="url(#gBend)"/>
        <path d="M1215 323L1357 367L1542 453C1560 465 1571 478 1570 490C1569 505 1545 520 1516 529L1396 444C1418 433 1425 424 1419 420C1416 416 1412 413 1406 409L1329 375Z" fill="url(#gStrip)"/>
        <g class="triad">
          <path d="M352 923L372 918L388 927L388 952L368 958L350 950Z" fill="#c9cacb" fill-opacity=".6" stroke="#b6b7b8"/>
          <path d="M352 923L370 931L368 958M370 931L388 927" fill="none" stroke="#b6b7b8"/>
          <path d="M354 948L382 940" stroke="#b4ccb4" stroke-width="3"/>
          <path d="M390 938L380 936L382 944Z" fill="#b4ccb4"/>
          <path d="M350 946V917" stroke="#0f2fd0" stroke-width="3"/>
          <path d="M350 909L354 921H346Z" fill="#0f2fd0"/>
          <path d="M352 951L372 960" stroke="#c02020" stroke-width="3.500"/>
          <path d="M379 963L368 963L372 954Z" fill="#c02020"/>
          <circle cx="349" cy="950" r="3.800" fill="#dcdcdc" stroke="#999" stroke-width=".6"/>
          <text x="345" y="908" class="ax ax-z">Z</text>
          <text x="387" y="942" class="ax ax-y">Y</text>
          <text x="378" y="970" class="ax ax-x">X</text>
        </g>
      </svg>
    </div>
  </main>

  <footer class="status">
    <svg class="st" viewBox="0 0 16 16"><rect width="16" height="16" fill="#d9d9d9"/><path d="M3 2h11l-2 5 2 5H3z" fill="#eee" stroke="#999" stroke-width=".6"/><path d="M5 3h2v2H5zM9 3h2v2H9zM7 5h2v2H7zM11 5h2v2h-2zM5 7h2v2H5zM9 7h2v2H9z" fill="#777"/></svg>
    <svg class="st" viewBox="0 0 16 16"><path d="M0 3V0h3M13 0h3v3M16 13v3h-3M3 16H0v-3" fill="none" stroke="#888"/><rect x="3" y="2" width="10" height="12" fill="#e8eef7" stroke="#666"/><rect x="4" y="5" width="8" height="6" fill="#5a86d8"/></svg>
  </footer>
  <div class="taskbar"><span class="clock">上午 10:47:27</span></div>

  <div class="wm" aria-hidden="true">
    <svg class="wm-hex" viewBox="0 0 72 82">
      <path d="M36 0L72 20V61L36 82L0 61V20Z" fill="#8fd2f3"/>
      <path d="M0 20L36 0L52 9C57 18 56 26 54 30L36 20L15 32C8 33 3 36 0 42Z" fill="#cde7f6"/>
      <path d="M0 42C3 36 8 33 15 32L17 52L18 62C22 68 26 72 36 82L0 61Z" fill="#abdbf4"/>
      <path d="M18 54L36 63L55 53L72 37V61L36 82C28 75 22 65 18 54Z" fill="#70c0e8"/>
      <path d="M36 7L58 20L57 52L36 65L15 52V32Z" fill="none" stroke="#e4e6e8" stroke-width="6"/>
      <path d="M36 22L53 31V51L36 61L20 51V31Z" fill="#e4e6e8"/>
      <path d="M36 23L52 32L36 41L20 32Z" fill="#cbe4f4"/>
      <path d="M20 32L36 41V60L20 51Z" fill="#a2d3f3"/>
      <path d="M52 32L36 41V60L52 51Z" fill="#79c5ee"/>
    </svg>
    <div class="wm-text"><div class="wm-big">3D世界网</div><div class="wm-small">WWW.3DSJW.COM</div></div>
  </div>
</div>
</body>
</html>
```
FILE: styles.css
```css
*{box-sizing:border-box}
html,body{margin:0;padding:0;height:1048px;overflow:hidden;background:#fff}
body{font-family:"Noto Sans","Noto Sans CJK SC",sans-serif;color:#1d1d1d;font-size:11px}
.defs{position:absolute;width:0;height:0}
i{font-style:normal;display:block}
.app{position:relative;width:1920px;height:1048px;display:flex;flex-direction:column;overflow:hidden}

.caret{width:0;height:0;border-left:3px solid transparent;border-right:3px solid transparent;border-top:3px solid #333}
.caret.bar{position:relative;margin-top:2px}
.caret.bar::before{content:"";position:absolute;left:-3px;top:-5px;width:6px;height:1px;background:#333}
.caret.ml{margin-left:9px}
.caret.dark{border-left-width:4px;border-right-width:4px;border-top-width:5px;border-top-color:#111;margin-left:auto;margin-right:5px}

/* title bar */
.titlebar{height:26px;display:flex;align-items:center;background:#fff;flex:none}
.qa{width:968px;display:flex;align-items:center;height:26px;padding-left:4px}
.nx{width:32px;font-weight:700;font-size:20px;color:#7c99ab;font-family:"Liberation Sans",sans-serif;letter-spacing:.5px;line-height:26px}
.qsep{width:1px;height:20px;background:#d5d5d5;flex:none}
.qsep.m5{margin-left:5px}
.qsep.m3{margin-left:3px}
.q{display:flex;align-items:center;justify-content:center;height:26px;flex:none}
.w8{width:8px}.w10{width:10px}.w12{width:12px}.w20{width:20px}.w26{width:26px}.w28{width:28px}.w31{width:31px}
.qi{width:16px;height:16px}
.qi.big{width:18px;height:18px}
.winmenu{font-size:11px;color:#111;width:22px;white-space:nowrap}
.apptitle{font-size:12.8px;color:#222;white-space:nowrap;width:190px;text-align:center}
.siemens{margin-left:auto;font-family:"Liberation Sans",sans-serif;font-weight:700;font-size:13px;color:#0f9a9a;letter-spacing:.2px;margin-right:25px}
.winctl{display:flex;gap:8px;padding-right:5px}
.wc{width:16px;height:16px}

/* tabs */
.tabs{height:28px;background:#c8d8d6;display:flex;align-items:stretch;flex:none;font-size:13px;line-height:28px;color:#222}
.tab-file{width:81px;background:#5e8a84;color:#fff;text-align:center;margin-right:2px}
.tab-home{width:52px;background:#fff;color:#2a93c8;text-align:center;border-top:1px solid #b8c4c4;margin-top:1px;line-height:26px}
.tab{padding:0 13px;white-space:nowrap;letter-spacing:.3px}
.tabs-right{margin-left:auto;display:flex;align-items:center;padding-right:4px}
.search{width:125px;height:19px;background:#fff;border:1px solid #a9b4b2;display:flex;align-items:center;padding:0 2px;font-size:11px;color:#a9a9a9;line-height:17px}
.search-i{width:16px;height:16px;margin-left:auto;margin-right:1px}
.ti{width:16px;height:16px;margin:0 3px}
.ti.m8{margin-left:11px}.ti.m5{margin-left:8px}.ti.m4{margin-left:7px}.ti.m2{margin-left:5px}.ti.m1{margin-left:2px}.ti.m0{margin-left:0}

/* ribbon */
.ribbon{height:94px;border-bottom:2px solid #dedede;display:flex;flex:none;background:#fff}
.group{display:flex;flex-direction:column;flex:none}
.g-feat{width:1009px;padding-left:8px}
.g-sync{width:170px;padding-left:13px}
.g-asm{width:336px;padding-left:13px}
.g-move{width:255px;padding-left:9px}
.g-rest{flex:1}
.vdiv{width:1px;height:84px;background:#dcdcdc;margin-top:5px;flex:none}
.g-body{height:76px;display:flex;padding-top:1px}
.g-foot{height:16px;display:flex;align-items:center}
.g-t{flex:1;text-align:center;color:#2f9bcb;font-size:11px;white-space:nowrap}
.g-c{margin-right:8px;margin-top:-2px;border-left-width:3px;border-right-width:3px;border-top-width:4px}
.g-feat .g-foot{margin-left:-8px}
.g-sync .g-foot{margin-left:-13px}
.g-asm .g-foot{margin-left:-13px}
.large{display:flex;flex:none;width:136px;margin-right:5px}
.lg{display:flex;flex-direction:column;align-items:center;flex:none;padding-top:5px;font-size:11px;white-space:nowrap;line-height:14px}
.lg1{width:56px}.lg2{width:34px}.lg3{width:46px}
.lgi{width:34px;height:31px;margin-bottom:5px}
.lg .caret{margin-top:5px}
.grid{display:grid;grid-auto-flow:column;grid-template-rows:repeat(3,22px);flex:none}
.c-feat{grid-template-columns:63px 74px 73px 73px 84px 95px 73px 73px 73px 95px auto}
.c-sync{grid-template-columns:73px auto}
.c-asm{grid-template-columns:84px 84px}
.c-move{grid-template-columns:73px auto}
.it{display:flex;align-items:center;gap:3px;white-space:nowrap;font-size:11px;line-height:22px}
.ic{width:16px;height:16px;flex:none}
.off{color:#bdbdbd}
.off svg{opacity:.4;filter:grayscale(1)}
.bigcol{width:81px;flex:none;display:grid;grid-template-rows:38px 30px}
.bi{display:flex;align-items:center;gap:4px;white-space:nowrap;font-size:11px}
.bic{width:23px;height:23px;flex:none}

/* toolbar */
.toolbar{height:32px;border-bottom:1px solid #a3a3a3;display:flex;align-items:center;flex:none;padding-left:10px;background:#fff}
.menu-i{width:16px;height:16px;flex:none}
.menu-t{margin-left:4px;width:40px;white-space:nowrap}
.menu-c{margin-left:4px}
.tsep{width:1px;height:24px;background:#d8d8d8;margin-left:6px;flex:none}
.sel{height:20px;border:1px solid #a9a9a9;background:#fff;display:flex;align-items:center;padding-left:2px;font-size:11px;line-height:18px;white-space:nowrap;flex:none}
.s1{width:133px;margin-left:12px}
.s2{width:141px;margin-left:8px}
.s3{width:56px;margin-left:4px;border-color:#7c7c7c}
.tset{display:flex;align-items:center;flex:none}
.ts-a{margin-left:6px;width:100px}
.ts-a .tb{width:25px}
.ts-b{margin-left:4px;gap:2px}
.tb{width:23px;height:23px;display:flex;align-items:center;justify-content:center;flex:none}
.tb.on{background:#c8d8d6;outline:1px solid #a9bcba;outline-offset:-1px}
.tic{width:17px;height:17px}
.s-c{margin-left:7px}
.ts-c{margin-left:9px;gap:1px}
.ts-c .tb{width:23px}
.tcaret{margin:0 3px 0 5px;flex:none}
.s-d{margin-left:8px}
.end-c{margin-left:auto;margin-right:5px;margin-top:8px}

/* workspace */
.work{height:838px;flex:none;display:flex;min-height:0;border-bottom:1px solid #a6a6a6}
.rail{width:32px;background:#dcdcdc;border-right:1px solid #a0a0a0;display:flex;flex-direction:column;align-items:center;flex:none;padding-left:3px}
.gear{width:16px;height:16px;margin-top:5px;flex:none;margin-left:-2px}
.ri{width:26px;height:26px;margin-top:16px;flex:none}
.ri.first{margin-top:29px}
.ri.after{margin-top:7px}
.ri.far{margin-top:28px}
.ri.far2{margin-top:26px}
.ri-active{width:29px;height:45px;margin:7px -1px 0 0;background:#fff;border:1px solid #a8a8a8;border-right:0;display:flex;align-items:center;justify-content:center;flex:none}
.ri-in{width:24px;height:24px}

.panel{width:252px;flex:none;background:#fff;border-right:1px solid #9a9a9a;padding:0 9px 0 6px;display:flex;flex-direction:column}
.p-head{height:28px;display:flex;align-items:center;font-size:12px;flex:none;padding-left:4px;justify-content:space-between;padding-right:7px}
.maxbox{width:12px;height:11px;border:1px solid #222;border-top-width:3px}
.tree{height:727px;border:2px solid #e4e4e4;border-top-width:1px;display:flex;flex-direction:column;flex:none;font-size:12px}
.t-head{height:22px;display:flex;background:#f0f0f0;border-bottom:2px solid #e4e4e4;flex:none}
.th-name{width:199px;padding:3px 0 0 6px;display:flex;align-items:center;line-height:17px;font-size:12px}
.sort{width:0;height:0;border-left:4px solid transparent;border-right:4px solid transparent;border-bottom:5px solid #111;margin-left:18px}
.th-new{flex:1;border-left:1px solid #d8d8d8;padding:3px 0 0 6px;font-size:12px;line-height:17px;overflow:hidden;white-space:nowrap}
.rows{flex:1;overflow:hidden;min-height:0}
.row{height:20px;border-bottom:1px solid #ececec;display:flex;position:relative}
.row:nth-child(even){background:#f9f9f9}
.name{width:199px;display:flex;align-items:center;padding-left:5px;white-space:nowrap;overflow:hidden}
.lat{flex:1;border-left:1px solid #ececec;display:flex;align-items:center;padding-left:5px}
.tw{width:9px;height:9px;border:1px solid #d0d0d0;background:#fff;display:flex;align-items:center;justify-content:center;font-size:10px;line-height:7px;color:#222;margin-right:5px;flex:none;font-family:"Liberation Sans",sans-serif}
.tw.none{border:0;background:none}
.ti-i{width:16px;height:16px;flex:none}
.lb{margin-left:3px}
.v1 .lb{margin-left:2px}
.vchk{width:12px;height:12px;flex:none}
.name .vchk{margin-left:2px}
.ti-i.cam{margin-left:3px;width:15px;height:15px}
.v0::before{content:"";position:absolute;left:9px;top:-1px;height:21px;border-left:1px dotted #999}
.v0:first-child::before{top:10px;height:10px}
.v0.last::before{height:10px}
.v0 .name::before{content:"";position:absolute;left:9px;top:10px;width:9px;border-top:1px dotted #999}
.v0 .tw{position:relative;z-index:1}
.v1 .name{padding-left:40px}
.v1::before{content:"";position:absolute;left:28px;top:-1px;height:21px;border-left:1px dotted #999}
.v1.end::before{height:11px}
.v1 .name::before{content:"";position:absolute;left:28px;top:10px;width:11px;border-top:1px dotted #999}
.cb{width:12px;height:12px;border:1px solid #111;background:#fff;display:flex;align-items:center;justify-content:center;flex:none;margin-right:3px}
.cbi{width:10px;height:10px}
.dim .lb{color:#a8a8a8}
.cur .lb{font-weight:700;color:#222}
.hscroll{height:15px;background:#f0f0f0;display:flex;align-items:center;margin:0;flex:none;border-bottom:0}
.arr{width:17px;text-align:center;font-size:18px;line-height:13px;color:#555;font-weight:700;font-family:"Liberation Sans",sans-serif;height:15px;flex:none}
.thumb{width:115px;height:15px;background:#cacaca}
.arr.r{margin-left:auto}
.splitter{height:5px;background:#d6d6d6;border:1px solid #a8a8a8;margin-top:1px;flex:none;width:236px}
.acc{height:24px;width:236px;border-bottom:2px solid #cfcfcf;display:flex;align-items:center;padding:0 6px 0 7px;color:#39a0d8;font-size:14px;line-height:22px;flex:none}
.chev{width:12px;height:8px;margin-left:auto;margin-top:-3px}

.view{flex:1;background:linear-gradient(180deg,#b3b3b3 0,#bdbfc1 14%,#d0d2d4 45%,#e0e1e3 78%,#e7e8ea 100%);position:relative;min-width:0}
.scene{width:1636px;height:837px;display:block}
.ax{font-size:10px;font-family:"Liberation Sans",sans-serif}
.ax-z{fill:#6a78f0}.ax-y{fill:#9dd09d}.ax-x{fill:#e05a5a}

/* status + task */
.status{height:22px;background:#fff;flex:none;display:flex;align-items:center;justify-content:flex-end;gap:4px;padding-right:55px}
.st{width:16px;height:16px}
.taskbar{height:8px;flex:none;background:linear-gradient(90deg,#5a3f3f 0,#46554a 5%,#46574d 5.200%,#236a96 5.210%,#236a96 7.700%,#4a6a6a 7.710%,#4d6f72 35%,#3c5660 60%,#4a5a58 80%,#5a5a50 86%,#4f4a42 100%);position:relative;overflow:hidden}
.clock{position:absolute;left:1823px;top:3px;color:#fff;font-size:12px;white-space:nowrap;line-height:14px}

/* watermark */
.wm{position:absolute;left:1637px;top:953px;display:flex;pointer-events:none}
.wm-hex{width:72px;height:82px;flex:none;opacity:.92}
.wm-text{margin-left:8px;color:rgba(255,255,255,.4)}
.wm-big{font-size:42px;font-weight:700;line-height:50px;margin-top:8px;white-space:nowrap;font-family:"Liberation Sans","Noto Sans CJK SC",sans-serif}
.wm-small{font-size:17px;line-height:18px;letter-spacing:1.5px;white-space:nowrap;font-family:"Liberation Sans",sans-serif;margin-top:0}
```
